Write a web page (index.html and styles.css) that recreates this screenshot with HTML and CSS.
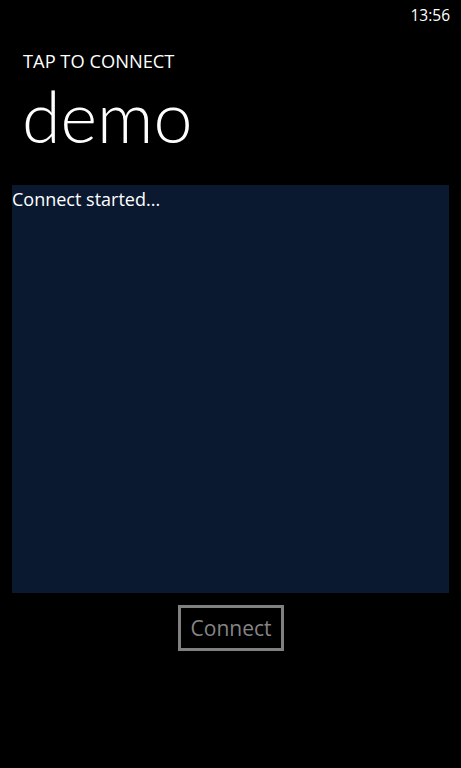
FILE: index.html
```html
<!DOCTYPE html>
<html>
<head>
<meta charset="utf-8">
<link rel="stylesheet" href="styles.css">
</head>
<body>
<div class="phone">
  <div class="status"><span class="time">13:56</span></div>
  <div class="titles">
    <div class="app-title">TAP TO CONNECT</div>
    <div class="page-title">demo</div>
  </div>
  <div class="log"><div class="log-line">Connect started...</div></div>
  <div class="actions"><button class="btn">Connect</button></div>
</div>
</body>
</html>
```
FILE: styles.css
```css
html, body {
  margin: 0;
  padding: 0;
  background: #000;
}
.phone {
  width: 461px;
  height: 768px;
  background: #000;
  color: #fff;
  font-family: "Open Sans", "Noto Sans", sans-serif;
  display: flex;
  flex-direction: column;
}
.status {
  height: 32px;
  display: flex;
  justify-content: flex-end;
  align-items: flex-start;
  padding-right: 11px;
}
.time {
  font-size: 15.5px;
  line-height: 16px;
  margin-top: 7px;
}
.titles {
  padding-left: 22px;
  height: 153px;
  display: flex;
  flex-direction: column;
}
.app-title {
  font-size: 18.3px;
  line-height: 25px;
  margin-top: 16.4px;
  padding-left: 1px;
}
.page-title {
  font-family: "Lato", "Open Sans", sans-serif;
  font-size: 70px;
  font-weight: 300;
  line-height: 84px;
  margin-top: 0.6px;
}
.log {
  margin: 0 12px;
  height: 408px;
  background: #0a1830;
}
.log-line {
  font-size: 18px;
  line-height: 28px;
}
.actions {
  display: flex;
  justify-content: center;
  margin-top: 12px;
  padding-left: 1px;
}
.btn {
  background: transparent;
  border: 3px solid #808080;
  color: #858585;
  font-family: "Open Sans", "Noto Sans", sans-serif;
  font-size: 21px;
  width: 106px;
  height: 46px;
  padding: 0;
  line-height: 38px;
}
```
